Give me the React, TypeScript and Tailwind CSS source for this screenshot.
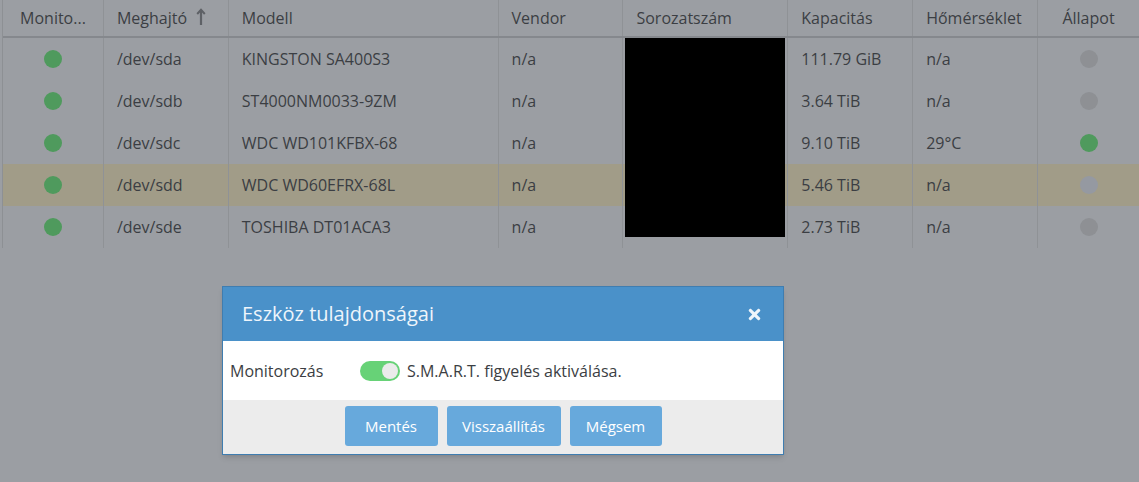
import React from "react";
import { FaTimes } from "react-icons/fa";

const cols = [
  { w: 100, label: "Monito...", center: true },
  { w: 125, label: "Meghajtó", sort: true },
  { w: 270, label: "Modell" },
  { w: 125, label: "Vendor" },
  { w: 165, label: "Sorozatszám" },
  { w: 125, label: "Kapacitás" },
  { w: 125, label: "Hőmérséklet" },
  { w: 102, label: "Állapot", center: true },
];

const rows = [
  { dev: "/dev/sda", model: "KINGSTON SA400S3", cap: "111.79 GiB", temp: "n/a", ok: false },
  { dev: "/dev/sdb", model: "ST4000NM0033-9ZM", cap: "3.64 TiB", temp: "n/a", ok: false },
  { dev: "/dev/sdc", model: "WDC WD101KFBX-68", cap: "9.10 TiB", temp: "29°C", ok: true },
  { dev: "/dev/sdd", model: "WDC WD60EFRX-68L", cap: "5.46 TiB", temp: "n/a", ok: false, hl: true },
  { dev: "/dev/sde", model: "TOSHIBA DT01ACA3", cap: "2.73 TiB", temp: "n/a", ok: false, last: true },
];

const Dot = ({ c }: { c: string }) => (
  <span className={`inline-block w-[18px] h-[18px] rounded-full ${c}`} />
);

export default function App() {
  return (
    <div
      className="relative w-[1139px] h-[482px] bg-[#9b9ea3] overflow-hidden text-[16px] text-[#3b3e43]"
      style={{ fontFamily: '"Open Sans", "Noto Sans", sans-serif' }}
    >
      <div className="ml-[2px] border-l border-[#8d9094]">
        {/* header */}
        <div className="flex h-[38px] border-b-2 border-[#85888d]">
          {cols.map((c, i) => (
            <div
              key={i}
              style={{ width: c.w }}
              className={`flex items-center h-full ${i > 0 ? "border-l border-[#8f9296]" : ""} ${
                c.center ? "justify-center" : "pl-[13px]"
              }`}
            >
              <span>{c.label}</span>
              {c.sort && (
                <svg width="10" height="18" viewBox="0 0 10 18" className="ml-[9px] mb-[2px]">
                  <path d="M5 2 L5 17" stroke="#5e6166" strokeWidth="2.2" />
                  <path d="M1.2 6 L5 1.8 L8.8 6" stroke="#5e6166" strokeWidth="2" fill="none" />
                </svg>
              )}
            </div>
          ))}
        </div>
        {/* rows */}
        <div className="relative">
          {rows.map((r, ri) => (
            <div key={ri} className={`flex h-[42px] ${r.hl ? "bg-[#a19c88]" : ""}`}>
              <div style={{ width: 100 }} className="flex items-center justify-center">
                <Dot c="bg-[#4f9a5d]" />
              </div>
              <div style={{ width: 125 }} className="flex items-center pl-[13px] border-l border-[#8f9296]">
                {r.dev}
              </div>
              <div style={{ width: 270 }} className="flex items-center pl-[13px] border-l border-[#8f9296]">
                {r.model}
              </div>
              <div style={{ width: 125 }} className="flex items-center pl-[13px] border-l border-[#8f9296]">
                n/a
              </div>
              <div style={{ width: 165 }} className="flex items-start border-l border-[#8f9296]">
                <div className={`w-[160px] ml-[2px] bg-black ${r.last ? "h-[31px]" : "h-full"}`} />
              </div>
              <div style={{ width: 125 }} className="flex items-center pl-[13px] border-l border-[#8f9296]">
                {r.cap}
              </div>
              <div style={{ width: 125 }} className="flex items-center pl-[13px] border-l border-[#8f9296]">
                {r.temp}
              </div>
              <div style={{ width: 102 }} className="flex items-center justify-center border-l border-[#8f9296]">
                <Dot c={r.ok ? "bg-[#4f9a5d]" : r.hl ? "bg-[#9599a1]" : "bg-[#8e9094]"} />
              </div>
            </div>
          ))}
        </div>
      </div>

      {/* modal */}
      <div className="absolute left-[222px] top-[286px] w-[562px] border border-[#3f7db0] shadow-md">
        <div className="h-[54px] bg-[#4a91c9] flex items-center justify-between pl-[19px] pr-[20px]">
          <span className="text-[20px] text-[#eef5fb]">Eszköz tulajdonságai</span>
          <FaTimes className="text-[#eef5fb] w-[17px] h-[17px]" />
        </div>
        <div className="h-[59px] bg-white flex items-center pl-[7px]">
          <span className="w-[130px]">Monitorozás</span>
          <span className="relative inline-block w-[40px] h-[20px] rounded-full bg-[#67d277] mr-[7px]">
            <span className="absolute right-[2px] top-[2px] w-[16px] h-[16px] rounded-full bg-[#ebebeb]" />
          </span>
          <span>S.M.A.R.T. figyelés aktiválása.</span>
        </div>
        <div className="h-[54px] bg-[#ececec] flex items-start justify-center gap-[9px] pt-[6px]">
          <button className="w-[93px] h-[40px] rounded-[3px] bg-[#67a9dc] text-white text-[15px]">Mentés</button>
          <button className="w-[114px] h-[40px] rounded-[3px] bg-[#67a9dc] text-white text-[15px]">Visszaállítás</button>
          <button className="w-[92px] h-[40px] rounded-[3px] bg-[#67a9dc] text-white text-[15px]">Mégsem</button>
        </div>
      </div>
    </div>
  );
}
